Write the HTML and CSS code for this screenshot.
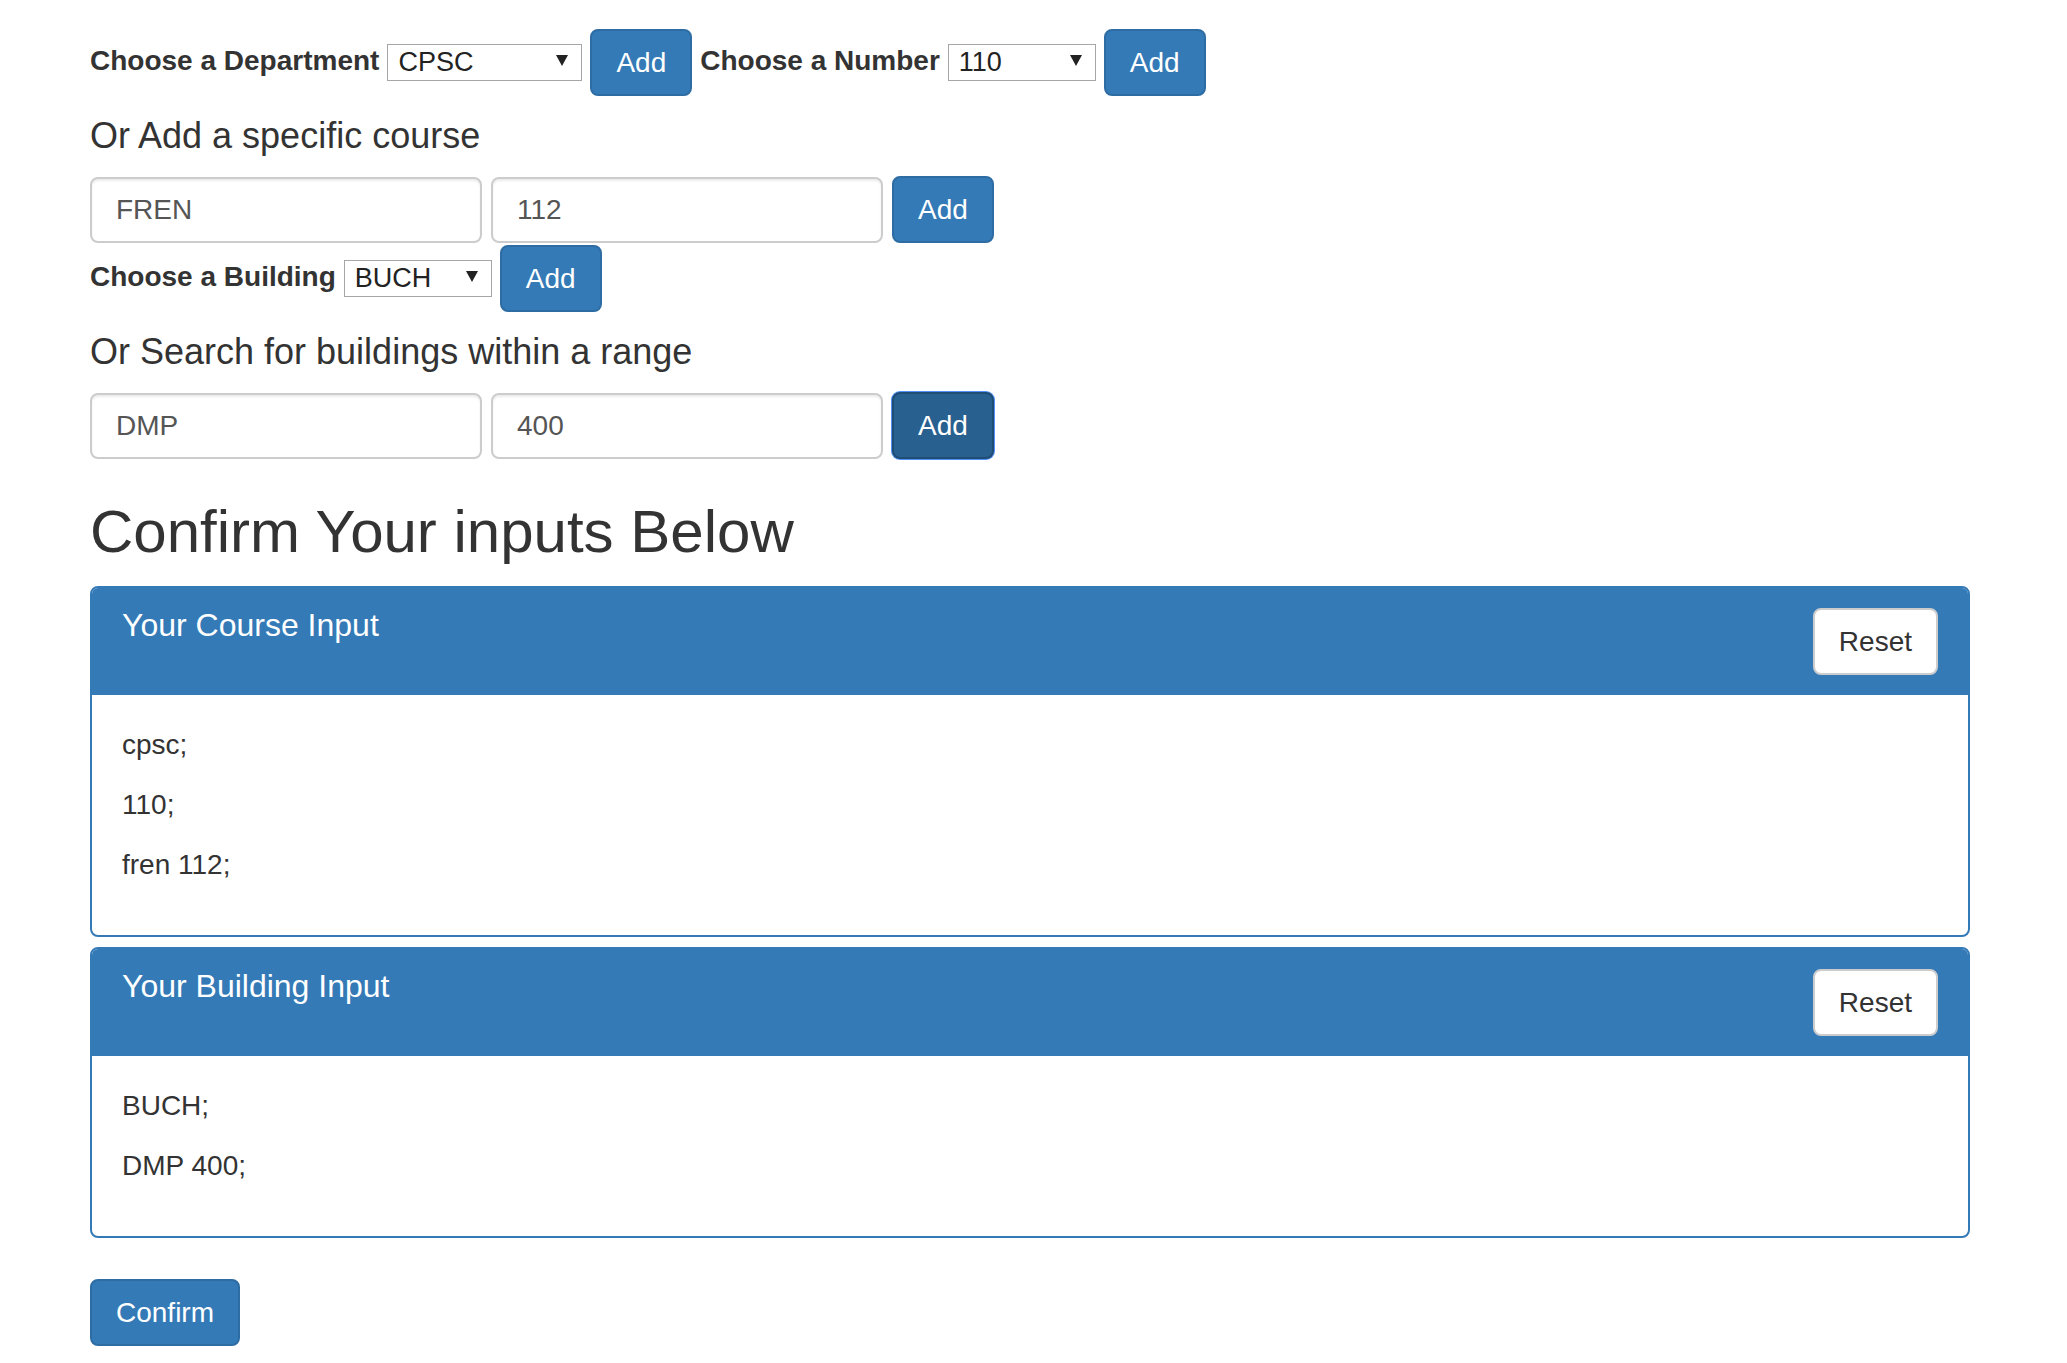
FILE: index.html
```html
<!DOCTYPE html>
<html lang="en">
<head>
<meta charset="utf-8">
<title>Course and Building Input</title>
<link rel="stylesheet" href="styles.css">
</head>
<body>
<div class="page">
  <div class="row row-select">
    <label class="lbl">Choose a Department</label>
    <span class="sel sel-wide">
      <select><option>CPSC</option><option>FREN</option></select>
      <svg class="caret" width="12" height="11" viewBox="0 0 12 11"><path d="M0 0H12L6 11Z"/></svg>
    </span>
    <button class="btn btn-primary">Add</button>
    <label class="lbl">Choose a Number</label>
    <span class="sel">
      <select><option>110</option><option>112</option></select>
      <svg class="caret" width="12" height="11" viewBox="0 0 12 11"><path d="M0 0H12L6 11Z"/></svg>
    </span>
    <button class="btn btn-primary">Add</button>
  </div>

  <h4 class="subhead">Or Add a specific course</h4>
  <div class="row row-inputs">
    <input class="field" type="text" value="FREN">
    <input class="field" type="text" value="112">
    <button class="btn btn-primary">Add</button>
  </div>

  <div class="row row-select row-building">
    <label class="lbl">Choose a Building</label>
    <span class="sel">
      <select><option>BUCH</option><option>DMP</option></select>
      <svg class="caret" width="12" height="11" viewBox="0 0 12 11"><path d="M0 0H12L6 11Z"/></svg>
    </span>
    <button class="btn btn-primary">Add</button>
  </div>

  <h4 class="subhead">Or Search for buildings within a range</h4>
  <div class="row row-inputs">
    <input class="field" type="text" value="DMP">
    <input class="field" type="text" value="400">
    <button class="btn btn-primary is-focused">Add</button>
  </div>

  <h2 class="title">Confirm Your inputs Below</h2>

  <div class="panel">
    <div class="panel-heading">
      <h3 class="panel-title">Your Course Input</h3>
      <button class="btn btn-default">Reset</button>
    </div>
    <div class="panel-body">
      <p>cpsc;</p>
      <p>110;</p>
      <p>fren 112;</p>
    </div>
  </div>

  <div class="panel panel-last">
    <div class="panel-heading">
      <h3 class="panel-title">Your Building Input</h3>
      <button class="btn btn-default">Reset</button>
    </div>
    <div class="panel-body">
      <p>BUCH;</p>
      <p>DMP 400;</p>
    </div>
  </div>

  <button class="btn btn-primary">Confirm</button>
</div>
</body>
</html>
```
FILE: styles.css
```css
* {
  box-sizing: border-box;
}

html, body {
  margin: 0;
  padding: 0;
  background: #fff;
}

body {
  font-family: "Liberation Sans", Arial, Helvetica, sans-serif;
  font-size: 28px;
  line-height: 40px;
  color: #333;
}

.page {
  width: 1880px;
  margin-left: 90px;
  padding-top: 29px;
}

.row {
  display: flex;
  align-items: center;
}

.row-select {
  gap: 8px;
}

.row-building {
  margin-top: 2px;
}

.row-inputs {
  gap: 9px;
}

.lbl {
  font-weight: bold;
  white-space: nowrap;
  margin-bottom: 4px;
}

.sel {
  position: relative;
  display: inline-block;
  width: 148px;
  height: 37px;
  margin-bottom: 4px;
}

.sel-wide {
  width: 195px;
}

.sel select {
  -webkit-appearance: none;
  appearance: none;
  width: 100%;
  height: 100%;
  margin: 0;
  padding: 0 0 0 10px;
  border: 1px solid #a6a6a6;
  border-radius: 0;
  background: #fff;
  color: #222;
  font-family: "Liberation Sans", Arial, sans-serif;
  font-size: 27px;
  line-height: 35px;
}

.caret {
  position: absolute;
  right: 14px;
  top: 13px;
  fill: #222;
  pointer-events: none;
}

.btn {
  display: inline-block;
  height: 67px;
  margin: 0;
  padding: 12px 24px;
  font-family: "Liberation Sans", Arial, sans-serif;
  font-size: 28px;
  line-height: 39px;
  border: 2px solid transparent;
  border-radius: 8px;
  white-space: nowrap;
  cursor: pointer;
}

.btn-primary {
  color: #fff;
  background: #337ab7;
  border-color: #2e6da4;
}

.btn-primary.is-focused {
  background: #286090;
  border-color: #204d74;
  box-shadow: 0 0 0 1px #4f8ff7;
}

.btn-default {
  color: #333;
  background: #fff;
  border-color: #ccc;
}

.subhead {
  margin: 20px 0;
  font-size: 36px;
  line-height: 40px;
  font-weight: normal;
  color: #333;
}

.field {
  width: 392px;
  height: 66px;
  margin: 0;
  padding: 12px 24px;
  font-family: "Liberation Sans", Arial, sans-serif;
  font-size: 28px;
  line-height: 40px;
  color: #555;
  background: #fff;
  border: 2px solid #ccc;
  border-radius: 8px;
  box-shadow: inset 0 2px 2px rgba(0, 0, 0, 0.075);
}

.title {
  margin: 40px 0 21px;
  font-size: 60px;
  line-height: 66px;
  font-weight: normal;
  color: #333;
}

.panel {
  border: 2px solid #337ab7;
  border-radius: 8px;
  background: #fff;
  margin-bottom: 10px;
  overflow: hidden;
}

.panel-last {
  margin-bottom: 41px;
}

.panel-heading {
  display: flex;
  justify-content: space-between;
  align-items: flex-start;
  padding: 20px 30px 18px;
  background: #337ab7;
  border-bottom: 2px solid #337ab7;
  color: #fff;
}

.panel-title {
  margin: 0;
  font-size: 32px;
  line-height: 35px;
  font-weight: normal;
  color: #fff;
}

.panel-body {
  padding: 30px;
}

.panel-body p {
  margin: 0 0 20px;
}
```
